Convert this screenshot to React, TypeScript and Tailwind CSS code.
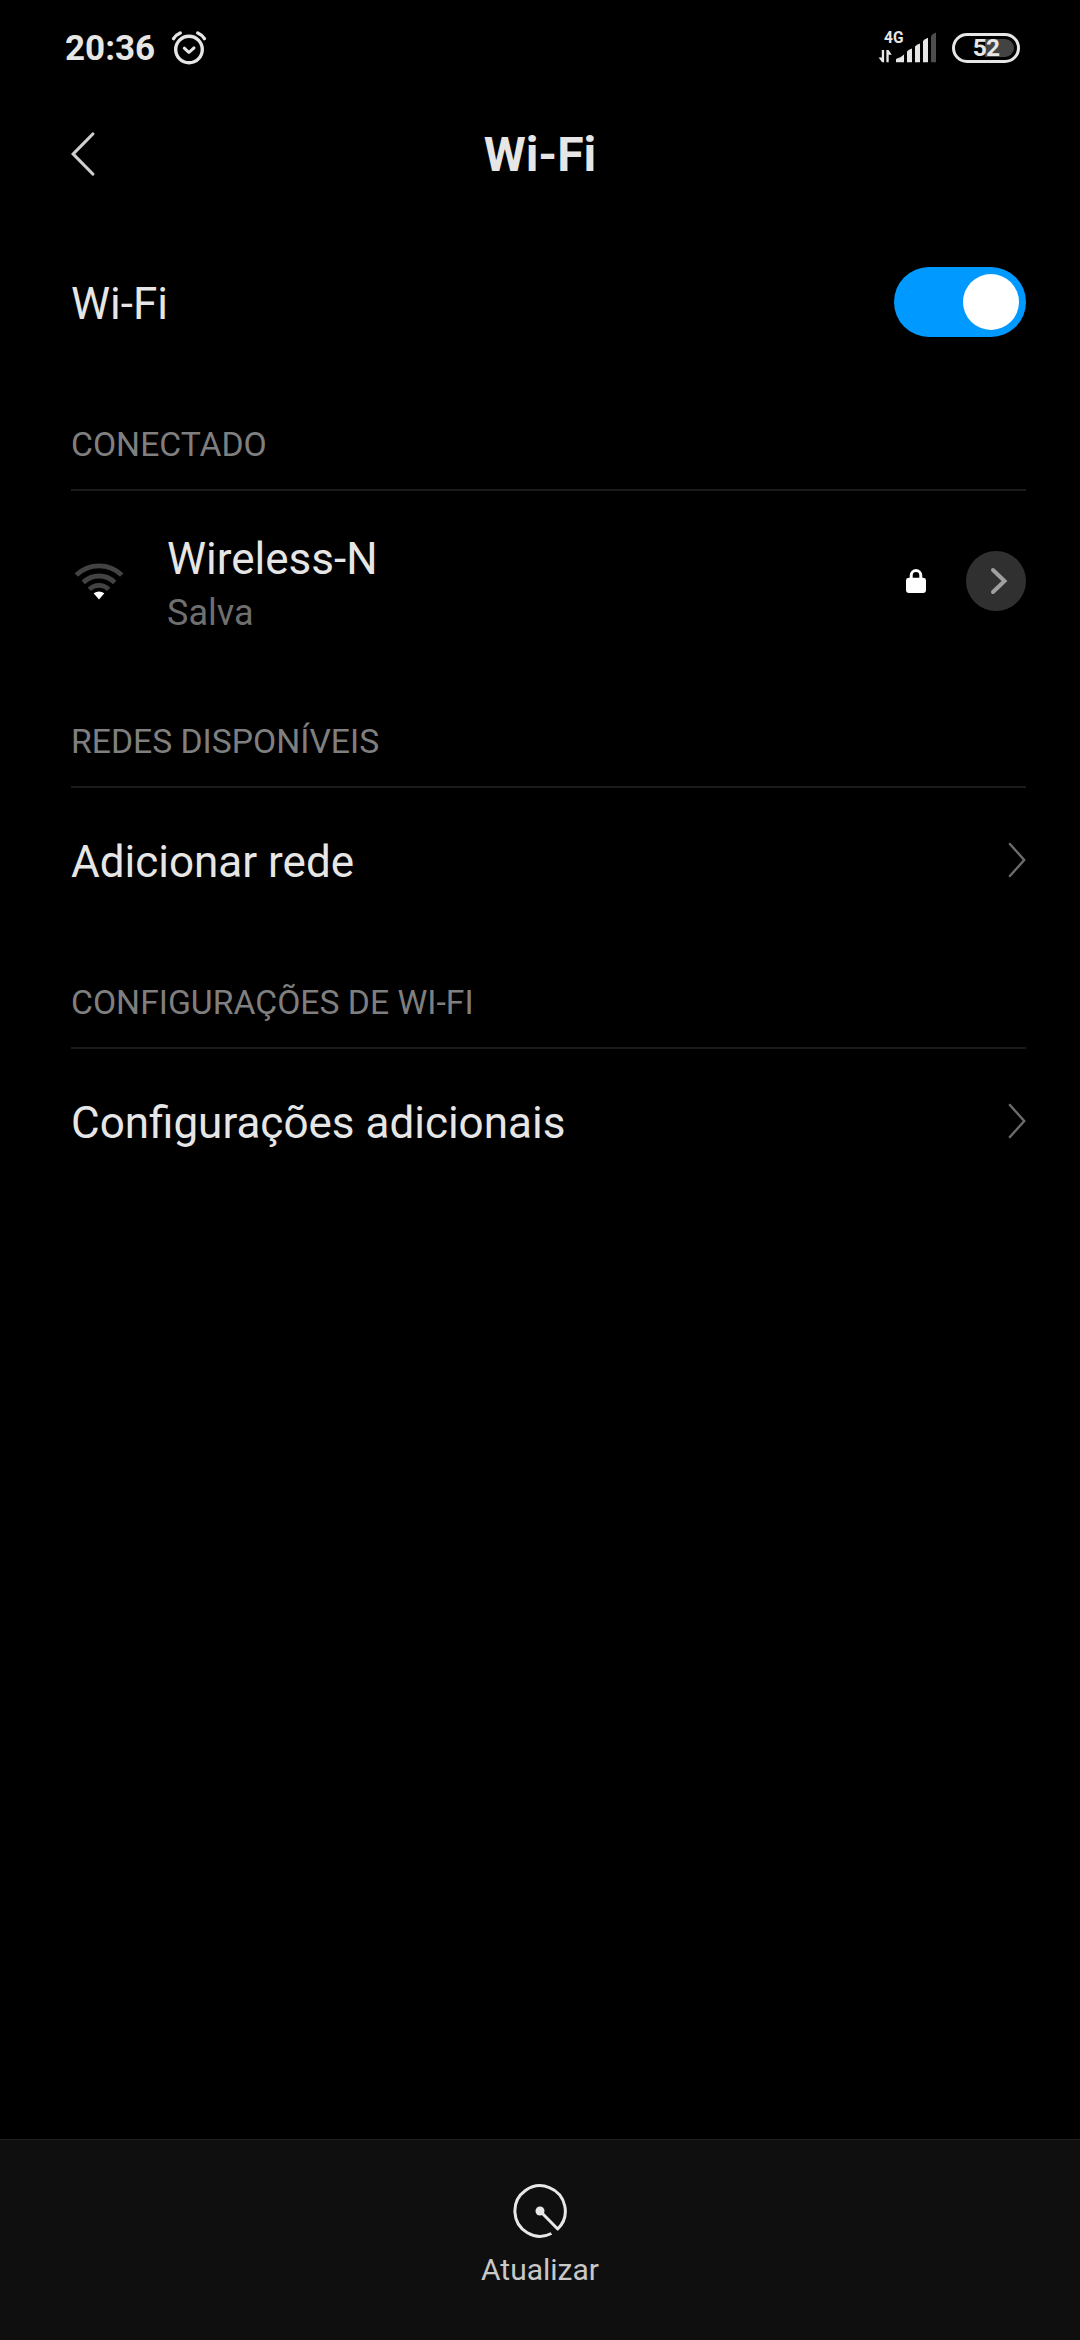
import { useState } from "react";
import type { ReactNode } from "react";

const AlarmIcon = () => (
  <svg className="w-[36px] h-[36px]" viewBox="0 0 36 36" fill="none" stroke="#e6e6e6" strokeLinecap="round">
    <circle cx="18" cy="18.5" r="13.3" strokeWidth="3.4" />
    <path d="M13.3 17.2L17.9 21.5L23 16.9" strokeWidth="3" strokeLinejoin="round" />
    <path d="M2.6 7.6Q5 3.8 9.2 2" strokeWidth="3.4" />
    <path d="M33.4 7.6Q31 3.8 26.8 2" strokeWidth="3.4" />
  </svg>
);

const SignalIcon = () => (
  <svg className="mb-[5px] w-[60px] h-[34px]" viewBox="0 0 60 34">
    <text x="6" y="13.8" fontSize="16" fontWeight="700" fill="#e6e6e6" textLength="19.5" lengthAdjust="spacingAndGlyphs">4G</text>
    <g fill="#e6e6e6">
      <path d="M3.8 21h2.3v12.2h-2L0.6 28.4h3.2z" />
      <path d="M8.4 33.2V21h2.1l3.3 4.8h-3.1v7.4z" />
      <path d="M18 33.2v-3.2q4.8-1.2 8-4.6v7.8z" />
      <path d="M29 33.2V22.4q1.6-1.7 5-2.8v13.6z" />
      <path d="M37 33.2V17.4q1.6-1.7 5-2.8v18.6z" />
      <path d="M45 33.2V12q1.6-1.9 5-3.2v24.4z" />
    </g>
    <path d="M53 33.2V7q1.6-2.2 5-3.4v29.6z" fill="#4d4d4d" />
  </svg>
);

const WifiIcon = () => (
  <svg className="w-[52px] h-[40px]" viewBox="0 0 52 40" fill="none" stroke="#434343" strokeWidth="4.8">
    <path d="M3.3 14A32.6 32.6 0 0 1 48.7 14" />
    <path d="M10.3 21.5A22.2 22.2 0 0 1 41.7 21.5" />
    <path d="M16.4 28.4A13.4 13.4 0 0 1 35.6 28.4" />
    <path d="M20.6 32.2Q26 28.6 31.4 32.2L26 38.6z" fill="#fff" stroke="none" />
  </svg>
);

const LockIcon = () => (
  <svg className="w-[20px] h-[24px]" viewBox="0 0 20 24">
    <rect x="0" y="8.7" width="20" height="15.3" rx="3" fill="#fff" />
    <path d="M5.2 10V6.4a4.8 4.8 0 0 1 9.6 0V10" fill="none" stroke="#fff" strokeWidth="3" />
  </svg>
);

const Chevron = () => (
  <svg className="w-[18px] h-[36px]" viewBox="0 0 18 36" fill="none" stroke="#6c6c6c" strokeWidth="2.4">
    <path d="M1.2 1.2L16.2 18L1.2 34.8" />
  </svg>
);

const RefreshIcon = () => (
  <svg className="w-[54px] h-[54px]" viewBox="-27 -27 54 54" fill="none" stroke="#e8e8e8" strokeWidth="3">
    <path d="M11.4 22.5A25.2 25.2 0 1 1 17.7 18L0 0" strokeLinejoin="round" />
    <circle cx="0" cy="0" r="4.5" fill="#e8e8e8" stroke="none" />
  </svg>
);

const SectionTitle = ({ children }: { children: ReactNode }) => (
  <h2 className="h-[65px] border-b-2 border-[#1b1b1b] text-[33.7px] leading-[38px] text-[#7f7f7f]">{children}</h2>
);

const LinkRow = ({ label }: { label: string }) => (
  <div className="flex h-[143px] items-center justify-between">
    <span className="pt-[5px] text-[44px] leading-[52px]">{label}</span>
    <Chevron />
  </div>
);

export default function App() {
  const [enabled, setEnabled] = useState(true);

  return (
    <div className="flex h-[2340px] w-[1080px] flex-col bg-black font-[Roboto,sans-serif] text-[#e6e6e6]">
      <div className="flex h-[97px] items-center justify-between pl-[65px] pr-[60px]">
        <div className="flex items-center">
          <span className="w-[106px] text-[35px] font-bold leading-[40px]">20:36</span>
          <AlarmIcon />
        </div>
        <div className="flex items-center">
          <SignalIcon />
          <div className="relative mb-[1px] ml-[14px] flex h-[30px] w-[68px] items-center justify-center rounded-full border-[3px] border-[#e6e6e6]">
            <div className="absolute right-[3px] top-[3px] h-[18px] w-[29px] rounded-r-full bg-[#434343]"></div>
            <span className="relative text-[24.5px] font-bold leading-[24px] tracking-[-0.8px]">52</span>
          </div>
        </div>
      </div>

      <div className="grid h-[113px] grid-cols-[1fr_auto_1fr] items-center px-[71px]">
        <svg className="w-[25px] h-[44px]" viewBox="0 0 25 44" fill="none" stroke="#cfcfcf" strokeWidth="3.2" strokeLinecap="round">
          <path d="M21.8 2L2.2 22L21.8 42" />
        </svg>
        <h1 className="pt-[2px] text-[48px] font-bold leading-[56px]">Wi-Fi</h1>
      </div>

      <div className="flex grow flex-col pl-[71px] pr-[54px]">
        <div className="flex h-[184px] items-center justify-between">
          <span className="pt-[4px] text-[44px] leading-[52px]">Wi-Fi</span>
          <button
            className={enabled
              ? "flex h-[70px] w-[132px] items-center justify-end rounded-full bg-[#0099ff] px-[7px]"
              : "flex h-[70px] w-[132px] items-center justify-start rounded-full bg-[#303030] px-[7px]"}
            onClick={() => setEnabled(!enabled)}
          >
            <span className="h-[56px] w-[56px] rounded-full bg-white"></span>
          </button>
        </div>

        <div className="pt-[32px]">
          <SectionTitle>CONECTADO</SectionTitle>
          <div className="flex h-[180px] items-center">
            <div className="w-[96px] pl-[2px]">
              <WifiIcon />
            </div>
            <div className="grow pt-[9px]">
              <p className="text-[44px] leading-[54px]">Wireless-N</p>
              <p className="text-[36px] leading-[54px] text-[#6f6f6f]">Salva</p>
            </div>
            <LockIcon />
            <div className="ml-[40px] flex h-[60px] w-[60px] items-center justify-center rounded-full bg-[#303030]">
              <svg className="ml-[5px] w-[18px] h-[28px]" viewBox="0 0 18 28" fill="none" stroke="#a0a0a0" strokeWidth="4" strokeLinecap="round">
                <path d="M3 3L14.5 14L3 25" />
              </svg>
            </div>
          </div>
        </div>

        <div className="pt-[52px]">
          <SectionTitle>REDES DISPONÍVEIS</SectionTitle>
          <LinkRow label="Adicionar rede" />
        </div>

        <div className="pt-[53px]">
          <SectionTitle>CONFIGURAÇÕES DE WI-FI</SectionTitle>
          <LinkRow label="Configurações adicionais" />
        </div>
      </div>

      <div className="flex h-[201px] flex-col items-center border-t border-[#222] bg-[#0f0f0f] pt-[44px]">
        <RefreshIcon />
        <span className="mt-[14px] text-[30px] leading-[36px] text-[#c8c8c8]">Atualizar</span>
      </div>
    </div>
  );
}
